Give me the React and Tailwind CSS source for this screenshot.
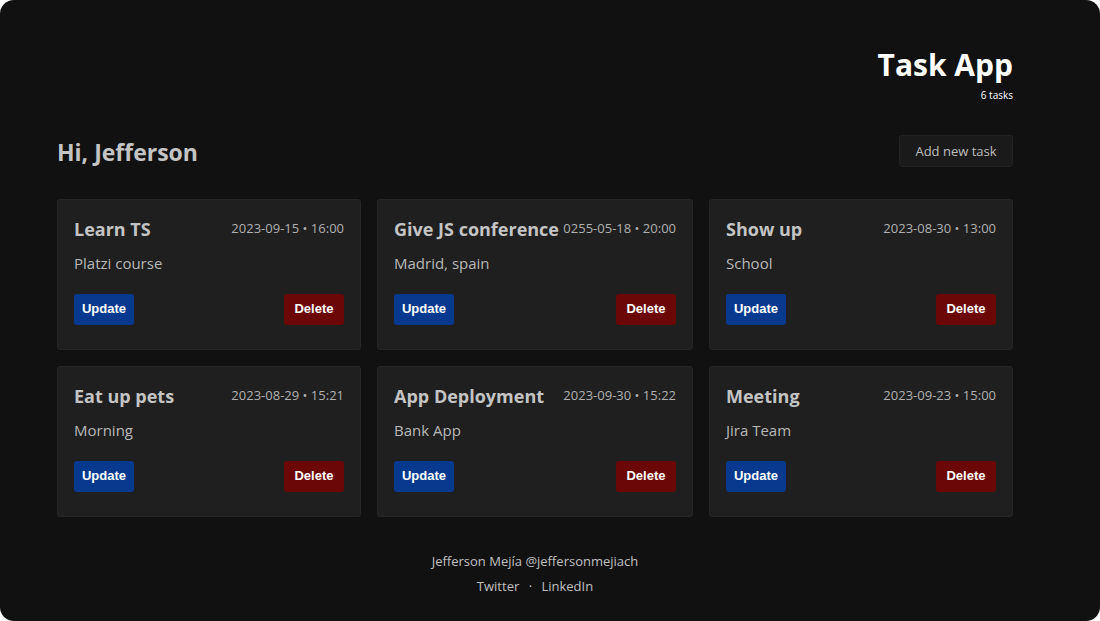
const tasks = [
  { title: 'Learn TS', date: '2023-09-15', time: '16:00', desc: 'Platzi course' },
  { title: 'Give JS conference', date: '0255-05-18', time: '20:00', desc: 'Madrid, spain' },
  { title: 'Show up', date: '2023-08-30', time: '13:00', desc: 'School' },
  { title: 'Eat up pets', date: '2023-08-29', time: '15:21', desc: 'Morning' },
  { title: 'App Deployment', date: '2023-09-30', time: '15:22', desc: 'Bank App' },
  { title: 'Meeting', date: '2023-09-23', time: '15:00', desc: 'Jira Team' },
];

function TaskCard({ task }) {
  return (
    <div className="bg-[#1f1f1f] border border-[#262626] rounded-[3px] pt-[17px] px-4 pb-6">
      <div className="flex items-center justify-between gap-1">
        <h3 className="text-[18px] font-bold text-[#c4c4c4] leading-6 whitespace-nowrap">{task.title}</h3>
        <span className="text-[13px] text-[#b0b0b0] whitespace-nowrap">
          {task.date} • {task.time}
        </span>
      </div>
      <p className="mt-[10px] text-[15px] text-[#b8b8b8] leading-6">{task.desc}</p>
      <div className="mt-[19px] flex items-center justify-between">
        <button className="h-[31px] w-[60px] rounded-[3px] bg-[#073a8e] text-white text-[13px] font-bold font-['Liberation_Sans',Arial,sans-serif]">
          Update
        </button>
        <button className="h-[31px] w-[60px] rounded-[3px] bg-[#6b0707] text-white text-[13px] font-bold font-['Liberation_Sans',Arial,sans-serif]">
          Delete
        </button>
      </div>
    </div>
  );
}

export default function App() {
  return (
    <div className="bg-white w-[1100px] h-[621px]">
      <div className="h-full bg-[#111111] rounded-[14px] font-['Open_Sans','Noto_Sans',sans-serif] pt-[44px]">
        <div className="w-[956px] ml-[57px]">
          <header className="flex flex-col items-end">
            <h1 className="text-[30px] font-bold text-white leading-[42px]">Task App</h1>
            <p className="text-[10px] text-white leading-4 mt-[1px]">6 tasks</p>
          </header>

          <div className="mt-[31px] flex items-center justify-between">
            <h2 className="text-[23px] font-bold text-[#c4c4c4] relative top-[1px]">Hi, Jefferson</h2>
            <button className="h-[32px] w-[114px] bg-[#1a1a1a] border border-[#222] rounded-[3px] text-[13px] text-[#bdbdbd]">
              Add new task
            </button>
          </div>

          <div className="mt-[30px] grid grid-cols-[304px_316px_304px] gap-x-4 gap-y-[16px]">
            {tasks.map((t) => (
              <TaskCard key={t.title} task={t} />
            ))}
          </div>

          <footer className="mt-[32px] flex flex-col items-center text-[13px] text-[#c0c0c0] leading-[25px]">
            <p>Jefferson Mejía @jeffersonmejiach</p>
            <p>
              Twitter <span className="mx-[6px]">·</span> LinkedIn
            </p>
          </footer>
        </div>
      </div>
    </div>
  );
}
